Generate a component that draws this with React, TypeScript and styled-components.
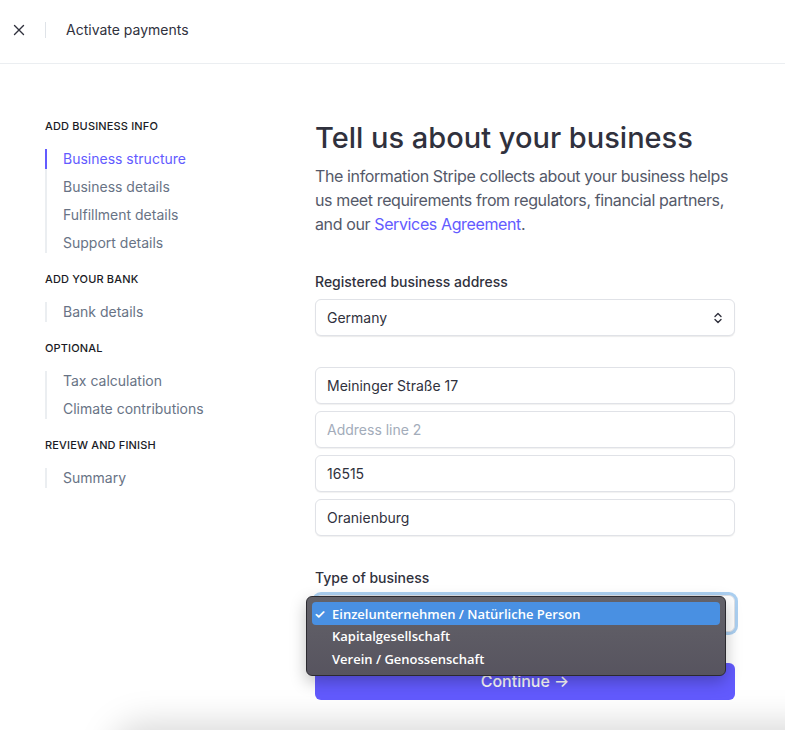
import styled, { createGlobalStyle } from 'styled-components';

const NAV_GROUPS = [
  {
    id: 'business',
    title: 'Add business info',
    items: ['Business structure', 'Business details', 'Fulfillment details', 'Support details'],
  },
  { id: 'bank', title: 'Add your bank', items: ['Bank details'] },
  { id: 'optional', title: 'Optional', items: ['Tax calculation', 'Climate contributions'] },
  { id: 'review', title: 'Review and finish', items: ['Summary'] },
];

const ADDRESS_FIELDS = [
  { id: 'line1', value: 'Meininger Straße 17', placeholder: 'Address line 1' },
  { id: 'line2', value: '', placeholder: 'Address line 2' },
  { id: 'zip', value: '16515', placeholder: 'Postal code' },
  { id: 'city', value: 'Oranienburg', placeholder: 'City' },
];

const BUSINESS_TYPES = [
  'Einzelunternehmen / Natürliche Person',
  'Kapitalgesellschaft',
  'Verein / Genossenschaft',
];

const ACTIVE_ITEM = 'Business structure';

const CloseIcon = () => (
  <svg width="12" height="12" viewBox="0 0 12 12" fill="none">
    <path d="M1.5 1.5l9 9M10.5 1.5l-9 9" stroke="#30313d" strokeWidth="1.4" strokeLinecap="round" />
  </svg>
);

const ChevronsIcon = () => (
  <svg width="8" height="12" viewBox="0 0 8 12" fill="none">
    <path d="M1 4.5L4 1.5l3 3M1 7.5l3 3 3-3" stroke="#30313d" strokeWidth="1.4" strokeLinecap="round" strokeLinejoin="round" />
  </svg>
);

export default function App() {
  return (
    <>
      <GlobalStyle />
      <PageStyle>
        <HeaderStyle>
          <CloseButtonStyle aria-label="Close">
            <CloseIcon />
          </CloseButtonStyle>
          <DividerStyle />
          <HeaderTitleStyle>Activate payments</HeaderTitleStyle>
        </HeaderStyle>

        <ContentStyle>
          <SidebarStyle>
            {NAV_GROUPS.map((group) => (
              <NavGroupStyle key={group.id}>
                <NavHeadingStyle>{group.title}</NavHeadingStyle>
                <NavListStyle>
                  {group.items.map((item) => (
                    <NavItemStyle key={item} $active={item === ACTIVE_ITEM}>
                      {item}
                    </NavItemStyle>
                  ))}
                </NavListStyle>
              </NavGroupStyle>
            ))}
          </SidebarStyle>

          <MainStyle>
            <TitleStyle>Tell us about your business</TitleStyle>
            <IntroStyle>
              The information Stripe collects about your business helps us meet requirements from
              regulators, financial partners, and our <LinkStyle href="#">Services Agreement</LinkStyle>.
            </IntroStyle>

            <FieldLabelStyle>Registered business address</FieldLabelStyle>
            <SelectStyle>
              <span>Germany</span>
              <ChevronsIcon />
            </SelectStyle>

            <AddressStackStyle>
              {ADDRESS_FIELDS.map((field) => (
                <InputStyle key={field.id} defaultValue={field.value} placeholder={field.placeholder} />
              ))}
            </AddressStackStyle>

            <FieldLabelStyle $spaced>Type of business</FieldLabelStyle>
            <SelectWrapStyle>
              <SelectStyle $focused>
                <span>{BUSINESS_TYPES[0]}</span>
                <ChevronsIcon />
              </SelectStyle>
              <PopupStyle>
                {BUSINESS_TYPES.map((type, i) => (
                  <OptionStyle key={type} $selected={i === 0}>
                    <CheckStyle>{i === 0 ? '✓' : ''}</CheckStyle>
                    {type}
                  </OptionStyle>
                ))}
              </PopupStyle>
            </SelectWrapStyle>

            <ContinueButtonStyle>Continue →</ContinueButtonStyle>
          </MainStyle>
        </ContentStyle>

        <BottomShadeStyle />
      </PageStyle>
    </>
  );
}

const GlobalStyle = createGlobalStyle`
  html, body {
    margin: 0;
    padding: 0;
    background: #ffffff;
    overflow: hidden;
  }
  body {
    font-family: Inter, "Liberation Sans", sans-serif;
    color: #30313d;
    -webkit-font-smoothing: antialiased;
  }
  * {
    box-sizing: border-box;
  }
`;

const PageStyle = styled.div`
  position: relative;
  width: 785px;
  height: 730px;
  overflow: hidden;
`;

const HeaderStyle = styled.header`
  height: 64px;
  display: flex;
  align-items: center;
  border-bottom: 1px solid #ebeef1;
  padding-left: 12px;
`;

const CloseButtonStyle = styled.button`
  width: 14px;
  height: 14px;
  padding: 0;
  border: none;
  background: none;
  display: flex;
  align-items: center;
  justify-content: center;
  margin-top: -4px;
`;

const DividerStyle = styled.div`
  width: 1px;
  height: 16px;
  background: #dfe3e8;
  margin: -4px 0 0 19px;
`;

const HeaderTitleStyle = styled.div`
  margin: -4px 0 0 20px;
  font-size: 14px;
  font-weight: 400;
  color: #30313d;
`;

const ContentStyle = styled.div`
  display: grid;
  grid-template-columns: 270px 420px;
  padding: 54px 0 0 45px;
`;

const SidebarStyle = styled.nav`
  display: flex;
  flex-direction: column;
  gap: 18px;
`;

const NavGroupStyle = styled.div`
  display: flex;
  flex-direction: column;
  gap: 15px;
`;

const NavHeadingStyle = styled.div`
  font-size: 11px;
  line-height: 16px;
  font-weight: 500;
  text-transform: uppercase;
  letter-spacing: 0.15px;
  color: #1a1b25;
`;

const NavListStyle = styled.ul`
  list-style: none;
  margin: 0;
  padding: 0;
  display: flex;
  flex-direction: column;
  gap: 8px;
  border-left: 2px solid #ebeef1;
`;

const NavItemStyle = styled.li<{ $active?: boolean }>`
  font-size: 14px;
  line-height: 20px;
  padding-left: 16px;
  margin-left: -2px;
  border-left: 2px solid ${({ $active }) => ($active ? '#635bff' : 'transparent')};
  color: ${({ $active }) => ($active ? '#635bff' : '#687385')};
`;

const MainStyle = styled.main`
  display: flex;
  flex-direction: column;
  padding-top: 2px;
`;

const TitleStyle = styled.h1`
  margin: 0;
  font-size: 29px;
  line-height: 36px;
  font-weight: 500;
  color: #30313d;
  letter-spacing: 0;
`;

const IntroStyle = styled.p`
  margin: 8px 0 0;
  font-size: 16px;
  line-height: 24px;
  letter-spacing: -0.38px;
  color: #545969;
`;

const LinkStyle = styled.a`
  color: #635bff;
  text-decoration: none;
`;

const FieldLabelStyle = styled.label<{ $spaced?: boolean }>`
  margin-top: ${({ $spaced }) => ($spaced ? '32px' : '36px')};
  margin-bottom: 7px;
  font-size: 14px;
  line-height: 20px;
  font-weight: 500;
  color: #30313d;
`;

const fieldBase = `
  width: 100%;
  height: 37px;
  border: 1px solid #e0e2e7;
  border-radius: 6px;
  background: #ffffff;
  box-shadow: 0 1px 1px rgba(0, 0, 0, 0.06);
  font-family: Inter, "Liberation Sans", sans-serif;
  font-size: 14px;
  color: #30313d;
  padding: 0 11px;
`;

const SelectStyle = styled.div<{ $focused?: boolean }>`
  ${fieldBase}
  display: flex;
  align-items: center;
  justify-content: space-between;
  padding-right: 12px;
  box-shadow: ${({ $focused }) =>
    $focused ? '0 0 0 3px rgba(104, 170, 230, 0.55)' : '0 1px 1px rgba(0, 0, 0, 0.08)'};
`;

const AddressStackStyle = styled.div`
  display: flex;
  flex-direction: column;
  gap: 7px;
  margin-top: 31px;
`;

const InputStyle = styled.input`
  ${fieldBase}
  outline: none;

  &::placeholder {
    color: #a3acba;
  }
`;

const SelectWrapStyle = styled.div`
  position: relative;
`;

const PopupStyle = styled.div`
  position: absolute;
  top: 1px;
  left: -9px;
  width: 420px;
  height: 80px;
  padding: 5px 5px;
  border-radius: 6px;
  border: 1px solid #2b2a30;
  background: linear-gradient(#636269, #57545f);
  box-shadow: 0 6px 16px rgba(0, 0, 0, 0.25);
  display: flex;
  flex-direction: column;
`;

const OptionStyle = styled.div<{ $selected?: boolean }>`
  height: 22.5px;
  flex-shrink: 0;
  display: flex;
  align-items: center;
  border-radius: 4px;
  padding: 1px 0 0 2px;
  font-family: "Open Sans", Inter, sans-serif;
  font-size: 13px;
  font-weight: 600;
  color: #ffffff;
  background: ${({ $selected }) => ($selected ? '#4990e2' : 'transparent')};
`;

const CheckStyle = styled.span`
  width: 18px;
  font-size: 13px;
`;

const ContinueButtonStyle = styled.button`
  margin-top: 31px;
  height: 37px;
  width: 100%;
  border: none;
  border-radius: 6px;
  background: #635bff;
  color: #ffffff;
  font-family: Inter, "Liberation Sans", sans-serif;
  font-size: 16px;
  font-weight: 500;
  padding-bottom: 2px;
`;

const BottomShadeStyle = styled.div`
  position: absolute;
  left: 110px;
  right: -60px;
  top: 722px;
  height: 70px;
  border-radius: 50px;
  background: rgba(0, 0, 0, 0.14);
  filter: blur(16px);
  pointer-events: none;
`;
